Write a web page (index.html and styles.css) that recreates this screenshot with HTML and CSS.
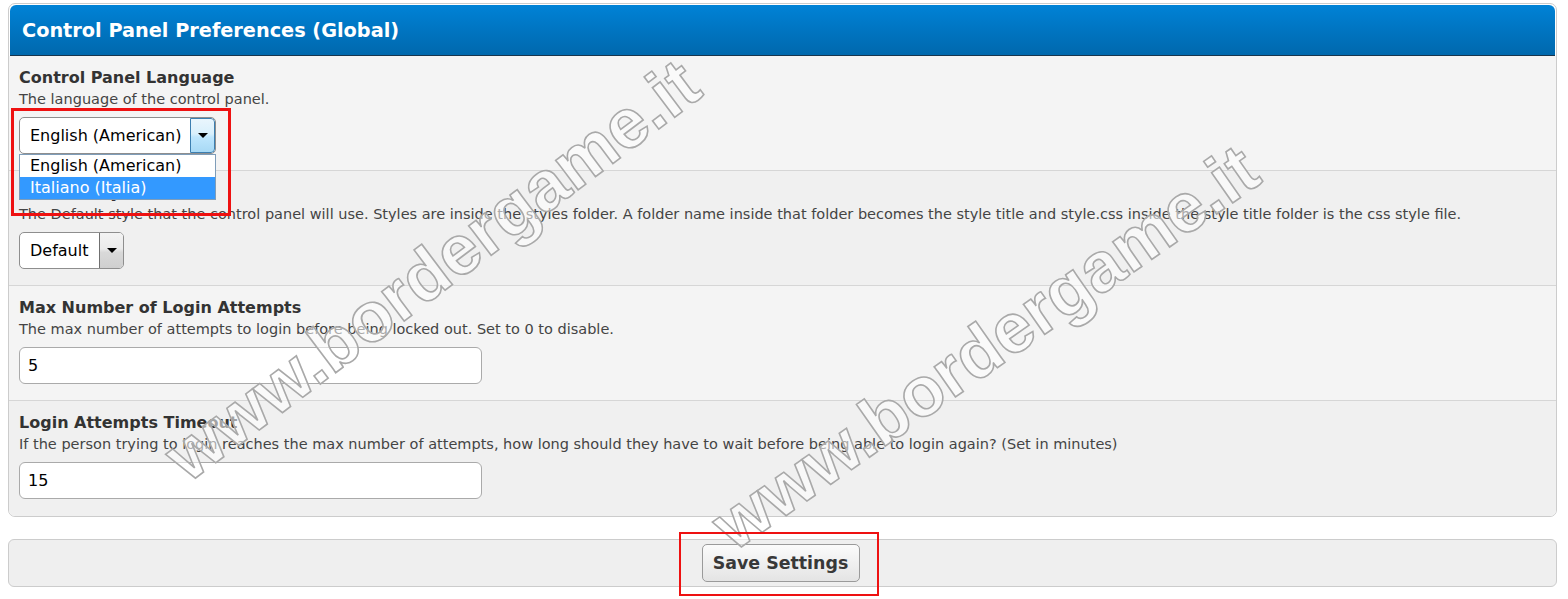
FILE: index.html
```html
<!DOCTYPE html>
<html>
<head>
<meta charset="utf-8">
<title>Control Panel Preferences (Global)</title>
<link rel="stylesheet" href="styles.css">
</head>
<body>
<div class="page">
  <div class="panel">
    <div class="panel-head">Control Panel Preferences (Global)</div>
    <div class="row odd">
      <div class="label">Control Panel Language</div>
      <div class="desc">The language of the control panel.</div>
      <div class="select-wrap">
        <div class="select lang">
          <span class="select-text">English (American)</span>
          <span class="select-btn hover"><span class="tri"></span></span>
        </div>
        <ul class="options">
          <li class="opt">English (American)</li>
          <li class="opt sel">Italiano (Italia)</li>
        </ul>
      </div>
    </div>
    <div class="row even">
      <div class="label">Default Style</div>
      <div class="desc">The Default style that the control panel will use. Styles are inside the styles folder. A folder name inside that folder becomes the style title and style.css inside the style title folder is the css style file.</div>
      <div class="select-wrap">
        <div class="select style">
          <span class="select-text">Default</span>
          <span class="select-btn"><span class="tri"></span></span>
        </div>
      </div>
    </div>
    <div class="row odd">
      <div class="label">Max Number of Login Attempts</div>
      <div class="desc">The max number of attempts to login before being locked out. Set to 0 to disable.</div>
      <div class="input">5</div>
    </div>
    <div class="row even last">
      <div class="label">Login Attempts Timeout</div>
      <div class="desc">If the person trying to login reaches the max number of attempts, how long should they have to wait before being able to login again? (Set in minutes)</div>
      <div class="input">15</div>
    </div>
  </div>
  <div class="save-bar">
    <button class="save-btn">Save Settings</button>
  </div>

  <div class="mark mark-a">www.bordergame.it</div>
  <div class="mark mark-b">www.bordergame.it</div>
  <div class="annot annot-a"></div>
  <div class="annot annot-b"></div>
</div>
</body>
</html>
```
FILE: styles.css
```css
html {
  overflow: hidden;
  height: 100%;
}
html, body {
  margin: 0;
  padding: 0;
  background: #ffffff;
}
body {
  min-height: 100%;
  box-sizing: border-box;
  padding: 3px 11px 0 8px;
  font-family: "DejaVu Sans", Verdana, sans-serif;
  color: #333333;
}
.page {
  position: relative;
  min-height: 596px;
}
.panel {
  border: 1px solid #cccccc;
  border-radius: 7px;
  padding: 1px 1px 0 1px;
  background: #ffffff;
  overflow: hidden;
}
.panel-head {
  height: 48px;
  line-height: 48px;
  padding-top: 2px;
  border-radius: 6px 6px 0 0;
  background: linear-gradient(#0082d6, #0068ad);
  border-bottom: 1px solid #17354d;
  color: #ffffff;
  font-weight: bold;
  font-size: 19.3px;
  padding-left: 12px;
}
.row {
  padding: 11px 10px 16px 10px;
  border-bottom: 1px solid #d6d6d6;
  margin: 0 -1px;
}
.row.odd { background: #f4f4f4; }
.row.even { background: #f0f0f0; }
.row.last {
  border-bottom: none;
  padding-bottom: 17px;
  border-radius: 0 0 6px 6px;
}
.label {
  font-weight: bold;
  font-size: 16px;
  line-height: 22px;
  color: #333333;
}
.desc {
  font-size: 14.5px;
  line-height: 20px;
  color: #444444;
}
.select-wrap {
  position: relative;
  margin-top: 8px;
  height: 37px;
}
.select {
  display: flex;
  height: 35px;
  border: 1px solid #8e8e8e;
  border-radius: 5px;
  background: #ffffff;
  box-sizing: content-box;
  overflow: hidden;
}
.select.lang { width: 195px; }
.select.style { width: 103px; }
.select-text {
  flex: 1;
  padding-left: 10px;
  line-height: 35px;
  font-size: 16px;
  color: #000000;
  font-family: "DejaVu Sans", Tahoma, sans-serif;
  white-space: nowrap;
}
.select-btn {
  width: 23px;
  border-left: 1px solid #707070;
  background: linear-gradient(#f3f3f3 0%, #ebebeb 45%, #d9d9d9 55%, #cfcfcf 100%);
  display: flex;
  align-items: center;
  justify-content: center;
}
.select-btn.hover {
  border: 1px solid #3c7fb1;
  border-radius: 0 4px 4px 0;
  background: linear-gradient(#eaf6fd 0%, #d9f0fc 45%, #bee6fd 55%, #a7d9f5 100%);
}
.tri {
  width: 0;
  height: 0;
  border-left: 5px solid transparent;
  border-right: 5px solid transparent;
  border-top: 5px solid #000000;
}
.options {
  position: absolute;
  left: 0;
  top: 37px;
  width: 195px;
  margin: 0;
  padding: 0;
  list-style: none;
  border: 1px solid #7f9db9;
  background: #ffffff;
  z-index: 5;
}
.opt {
  height: 22px;
  line-height: 22px;
  padding-left: 10px;
  font-size: 16px;
  color: #000000;
  font-family: "DejaVu Sans", Tahoma, sans-serif;
  white-space: nowrap;
}
.opt.sel {
  background: #3399ff;
  color: #ffffff;
}
.input {
  margin-top: 8px;
  width: 453px;
  height: 35px;
  line-height: 35px;
  padding-left: 8px;
  border: 1px solid #aaaaaa;
  border-radius: 6px;
  background: #ffffff;
  font-size: 16px;
  color: #000000;
  font-family: "DejaVu Sans", Tahoma, sans-serif;
}
.save-bar {
  margin-top: 22px;
  height: 38px;
  padding: 4px 0;
  border: 1px solid #cccccc;
  border-radius: 6px;
  background: #efefef;
  display: flex;
  justify-content: center;
}
.save-btn {
  width: 158px;
  height: 38px;
  padding: 0;
  border: 1px solid #9a9a9a;
  border-radius: 5px;
  background: linear-gradient(#fbfbfb, #e4e4e4);
  font-family: "DejaVu Sans", Verdana, sans-serif;
  font-weight: bold;
  font-size: 17.4px;
  color: #383838;
  margin-right: 4px;
}
.mark {
  position: absolute;
  white-space: nowrap;
  font-family: "Liberation Sans", Arial, sans-serif;
  font-weight: bold;
  font-size: 70px;
  color: rgba(255, 255, 255, 0.55);
  -webkit-text-stroke: 1.6px #a9a9a9;
  transform: translate(-50%, -50%) rotate(-37deg);
  pointer-events: none;
  z-index: 8;
}
.mark-a { left: 424px; top: 267px; }
.mark-b { left: 977px; top: 344px; transform: translate(-50%, -50%) rotate(-35deg); }
.annot {
  position: absolute;
  border: 3px solid #ee1111;
  z-index: 9;
  box-sizing: border-box;
}
.annot-a { left: 3px; top: 105px; width: 220px; height: 108px; }
.annot-b { left: 671px; top: 529px; width: 200px; height: 64px; border-width: 2px; }
```
